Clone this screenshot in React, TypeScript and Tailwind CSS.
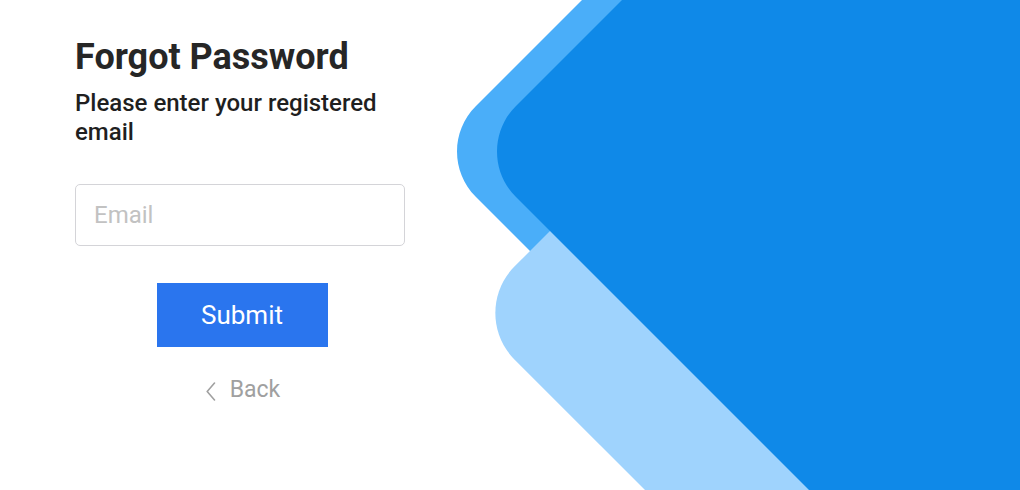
const Shapes = () => (
  <svg
    className="pointer-events-none absolute inset-0 h-full w-full"
    viewBox="0 0 1020 490"
    preserveAspectRatio="none"
  >
    <path
      d="M592,-10 L475.75,106.25 C450.77,131.23 450.77,171.77 475.75,196.75 L800,521 L1030,521 L1030,-10 Z"
      fill="#4aaef9"
    />
    <path
      d="M700,81 L514.67,266.33 C488.91,292.09 488.91,333.91 514.67,359.67 L675,520 L1030,520 L1030,81 Z"
      fill="#9fd3fd"
    />
    <path
      d="M632,-10 L515.75,106.25 C490.77,131.23 490.77,171.77 515.75,196.75 L840,521 L1030,521 L1030,-10 Z"
      fill="#0f89e8"
    />
  </svg>
);

const Chevron = () => (
  <svg width="10" height="19" viewBox="0 0 10 19" fill="none" className="mt-[3px]">
    <path d="M8.5 1 L1.2 9.5 L8.5 18" stroke="#a0a0a0" strokeWidth="1.6" strokeLinecap="round" strokeLinejoin="round" />
  </svg>
);

export default function App() {
  return (
    <div
      className="relative h-[490px] w-[1020px] overflow-hidden bg-white"
      style={{ fontFamily: "Roboto, 'Liberation Sans', sans-serif" }}
    >
      <Shapes />

      <div className="relative box-content flex w-[334px] flex-col pl-[75px] pt-[35px]">
        <h1 className="text-[36px] font-bold leading-[44px] text-[#262626]">Forgot Password</h1>
        <p className="mt-[10px] w-[330px] text-[24px] font-medium leading-[28.5px] text-[#1f1f1f]">
          Please enter your registered email
        </p>

        <input
          type="email"
          placeholder="Email"
          className="mt-[38px] h-[62px] w-[330px] rounded-[5px] border border-[#d4d4d8] px-[18px] text-[24px] text-[#333] outline-none placeholder:text-[#c2c2c2]"
        />

        <div className="mt-[37px] flex flex-col items-center">
          <button className="h-[64px] w-[171px] bg-[#2a75ee] text-[26px] text-white">Submit</button>
          <button className="ml-[2px] mt-[29px] flex items-center gap-[14px] text-[23px] leading-[28px] text-[#a0a0a0]">
            <Chevron />
            Back
          </button>
        </div>
      </div>
    </div>
  );
}
